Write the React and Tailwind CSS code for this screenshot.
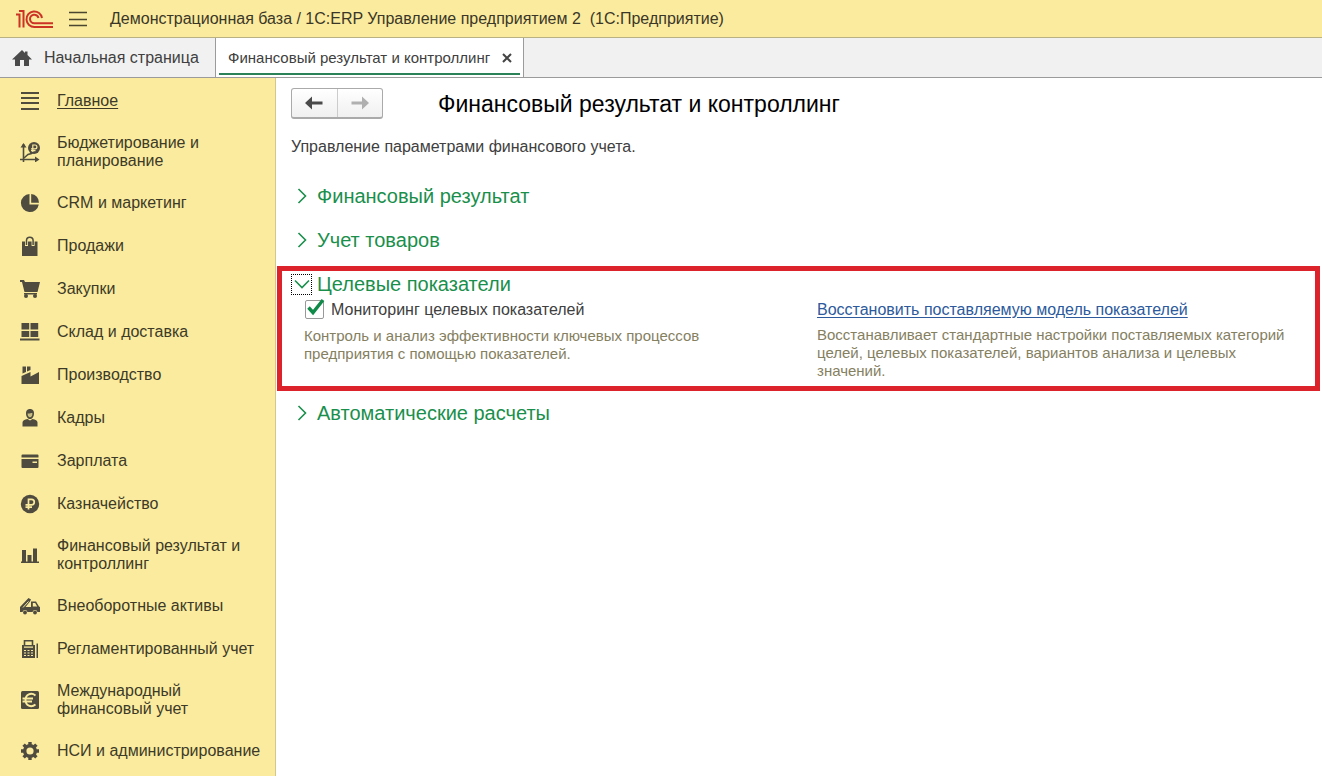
import { useState } from "react";

const ICON = "#4f4c3f";

const icons = {
  main: (
    <g stroke={ICON} strokeWidth="2">
      <path d="M1 2h18M1 7h18M1 12h18M1 18h18" />
    </g>
  ),
  budget: (
    <g fill="none" stroke={ICON}>
      <path d="M3.500 2v18M0 17.500h17" strokeWidth="1.600" />
      <path d="M.5 5.500l3-4.500 3 4.500zM15 14.500l4.500 3-4.500 3z" fill={ICON} stroke="none" />
      <path d="M4 16l4-3.500 3.500-1 2-2" strokeWidth="1.500" />
      <circle cx="14" cy="6" r="6" fill={ICON} stroke="none" />
      <path d="M12.800 10V3h2.200a1.900 1.900 0 0 1 0 3.800h-4M11 8.600h4.500" stroke="#faeb9e" strokeWidth="1.200" />
    </g>
  ),
  crm: (
    <g fill={ICON}>
      <path d="M9.500 1a9 9 0 1 0 9.300 10.500H9.500z" />
      <path d="M11.200 1v8.700h7.800A8.500 8.500 0 0 0 11.200 1z" />
    </g>
  ),
  sales: (
    <g>
      <path d="M2 5.500h15.500V20H2z" fill={ICON} />
      <path d="M6.500 10V4.500a3.300 3.300 0 0 1 6.600 0V10" fill="none" stroke="#faeb9e" strokeWidth="3" />
      <path d="M6.500 9V4.500a3.300 3.300 0 0 1 6.600 0V9" fill="none" stroke={ICON} strokeWidth="1.500" />
    </g>
  ),
  cart: (
    <g fill={ICON}>
      <path d="M0 1h4l1 2h15L17.500 13H4.500L2 3H0z" />
      <path d="M4 14h13v1.500H4z" />
      <circle cx="6" cy="17" r="2" />
      <circle cx="15" cy="17" r="2" />
    </g>
  ),
  stock: (
    <path d="M1.500 1h7.700v6.500H1.500zM10.500 1h7.700v6.500h-7.700zM1.500 9h7.700v6H1.500zM10.500 9h7.700v6h-7.700zM0 16.500h19.500v2H0z" fill={ICON} />
  ),
  factory: (
    <g fill={ICON}>
      <path d="M1.500 19v-8l9-4v4.500L19 7v12z" />
      <path d="M2.500 8.500V1.500h3.500v5.500zM7 6.500v-5h3.500v3.500z" />
    </g>
  ),
  staff: (
    <g fill={ICON}>
      <path d="M6 5.500C6 2 8 1 10 1s4 1 4 4.500S12 11 10 11 6 9 6 5.500z" />
      <path d="M7.600 5.500c2 .3 3-.5 4.800-.5 0 3-1 4.300-2.400 4.300S7.600 8 7.600 5.500z" fill="#c9be82" />
      <path d="M2.500 18.500v-4c0-2 2-3 5-3.500l2.500 1.500 2.500-1.500c3 .5 5 1.500 5 3.500v4z" />
    </g>
  ),
  salary: (
    <path d="M2.500 3.500h15a1 1 0 0 1 1 1v2h-17v-2a1 1 0 0 1 1-1zM1.500 8h17v8a1 1 0 0 1-1 1h-15a1 1 0 0 1-1-1zM12.500 10.500V12H17v-1.500z" fillRule="evenodd" fill={ICON} />
  ),
  treasury: (
    <g>
      <circle cx="10" cy="10" r="9.200" fill={ICON} />
      <path d="M8.500 15.500V5.300h3a2.800 2.800 0 0 1 0 5.600H5.500M5.500 13.200h6.500" fill="none" stroke="#faeb9e" strokeWidth="1.700" />
    </g>
  ),
  bars: (
    <path d="M2 5h4v12H2zM7.500 10h4v7h-4zM13 3.500h4V17h-4zM1 16.500h18V18H1z" fill={ICON} />
  ),
  truck: (
    <g fill={ICON}>
      <path d="M0 11L8.500 2l2.500 1.500-1 2L5.500 11H11V5.500h5l3 5 1 .5v5h-2.500a2.600 2.600 0 0 0-5 0H7.500a2.600 2.600 0 0 0-5 0H0z" />
      <path d="M12.800 7h2.400l2 3.500h-4.400z" fill="#faeb9e" />
      <path d="M3 11.500l5.500-6" stroke="#faeb9e" strokeWidth="1" />
      <circle cx="5" cy="16.500" r="1.900" />
      <circle cx="15" cy="16.500" r="1.900" />
    </g>
  ),
  register: (
    <g>
      <path d="M4.500 7V1.700h8V7" fill="none" stroke={ICON} strokeWidth="1.600" />
      <path d="M2 6h13v13H2zM16.500 4.500H18V19h-1.500z" fill={ICON} />
      <path d="M4 8.200h9M4 11.500h2M7.500 11.500h2M11 11.500h2M4 14h2M7.500 14h2M11 14h2M4 16.500h2M7.500 16.500h2M11 16.500h2" stroke="#faeb9e" strokeWidth="1.200" />
    </g>
  ),
  euro: (
    <g>
      <rect x="1" y="1" width="18" height="18" rx="1.500" fill={ICON} />
      <path d="M15.500 5.500C11 2 5.500 4.500 5.500 10s5.500 8 10 4.500M2.500 8.500h10.500M2.500 11.500h9.500" fill="none" stroke="#faeb9e" strokeWidth="1.900" />
    </g>
  ),
  gear: (
    <g>
      <circle cx="10" cy="10" r="5.300" fill="none" stroke={ICON} strokeWidth="3.400" />
      <path d="M10 1v3M10 16v3M1 10h3M16 10h3M3.600 3.600l2.200 2.200M14.200 14.200l2.200 2.200M3.600 16.400l2.200-2.200M14.200 5.800l2.200-2.200" stroke={ICON} strokeWidth="3.400" />
    </g>
  ),
};

const menu = [
  { icon: "main", label: "Главное", active: true },
  { icon: "budget", label: "Бюджетирование и планирование" },
  { icon: "crm", label: "CRM и маркетинг" },
  { icon: "sales", label: "Продажи" },
  { icon: "cart", label: "Закупки" },
  { icon: "stock", label: "Склад и доставка" },
  { icon: "factory", label: "Производство" },
  { icon: "staff", label: "Кадры" },
  { icon: "salary", label: "Зарплата" },
  { icon: "treasury", label: "Казначейство" },
  { icon: "bars", label: "Финансовый результат и контроллинг" },
  { icon: "truck", label: "Внеоборотные активы" },
  { icon: "register", label: "Регламентированный учет" },
  { icon: "euro", label: "Международный финансовый учет" },
  { icon: "gear", label: "НСИ и администрирование" },
];

function Logo() {
  return (
    <svg width="38" height="20" viewBox="0 0 38 20" fill="none" stroke="#cc3325" strokeWidth="2">
      <path d="M0 5.500h3.500v13M3 2h4.500v16.500" />
      <path d="M26 9A7.800 7.800 0 1 0 18.500 18H37" />
      <path d="M22.500 9A4.300 4.300 0 1 0 18.500 14.300H37" />
    </svg>
  );
}

function Arrow({ back }) {
  return (
    <svg width="18" height="14" viewBox="0 0 18 14" fill={back ? "#4a4a4a" : "#b0b0b0"}>
      {back ? <path d="M0 7l7-6.500v5h10.500v3H7v5z" /> : <path d="M18 7l-7-6.500v5H.5v3H11v5z" />}
    </svg>
  );
}

function SectionTitle({ title, open, onClick }) {
  return (
    <button type="button" aria-expanded={open} onClick={onClick} className="flex items-center gap-[5px] text-xl leading-6 text-[#1a8f4c]">
      <span className={open ? "flex size-[21px] items-center justify-center border border-dotted border-black" : "flex size-[21px] items-center justify-center"}>
        <svg width="16" height="16" viewBox="0 0 16 16" fill="none" stroke="#1a8f4c" strokeWidth="1.600">
          {open ? <path d="M1 4.500l7 7 7-7" /> : <path d="M4.500 1l7 7-7 7" />}
        </svg>
      </span>
      {title}
    </button>
  );
}

export default function App() {
  const [open, setOpen] = useState({ targets: true });
  const [monitoring, setMonitoring] = useState(true);

  const toggle = (key) => setOpen({ ...open, [key]: !open[key] });

  return (
    <div className="flex min-h-screen flex-col bg-white font-['Liberation_Sans',Arial,sans-serif] text-base leading-[18px] text-[#404040]">
      <header className="flex h-[38px] items-center border-b border-[#b9b184] bg-[#faeb9e] pl-4">
        <Logo />
        <button type="button" aria-label="Меню" className="ml-[15px]">
          <svg width="18" height="16" viewBox="0 0 18 16" stroke="#4a462f" strokeWidth="1.300">
            <path d="M0 1.500h18M0 8.500h18M0 14.500h18" />
          </svg>
        </button>
        <span className="ml-[23px] whitespace-pre text-[#3a3728]">
          {"Демонстрационная база / 1С:ERP Управление предприятием 2  (1С:Предприятие)"}
        </span>
      </header>

      <nav className="flex h-10 border-b border-[#9b9b9b] bg-[#f1f1f1]">
        <a href="#home" className="flex w-[215px] items-center gap-3 pl-3">
          <svg width="20" height="18" viewBox="0 0 20 18" fill="#4a4a4a">
            <path d="M10 1L0 10.500h3V17h5v-6h4v6h5v-6.500h3L15.500 6V2.500H13V4z" />
          </svg>
          Начальная страница
        </a>
        <div className="flex border-x border-[#9b9b9b] bg-white px-[3px] pb-[2px]">
          <div className="flex items-center gap-3 border-b-2 border-[#2b8158] pt-1 pr-2 pl-[9px] text-[15px]">
            <a href="#result">Финансовый результат и контроллинг</a>
            <button type="button" aria-label="Закрыть">
              <svg width="10" height="10" viewBox="0 0 10 10" stroke="#444" strokeWidth="2">
                <path d="M1 1l8 8M9 1L1 9" />
              </svg>
            </button>
          </div>
        </div>
      </nav>

      <div className="flex flex-1">
        <aside className="w-[276px] shrink-0 border-r border-[#d3c88c] bg-[#faeb9e] pt-px">
          {menu.map((item) => (
            <a key={item.icon} href={"#" + item.icon} className="flex min-h-[43px] items-center gap-[17px] pt-3 pr-3 pb-[11px] pl-5 text-[#3d3a28]">
              <svg width="20" height="20" viewBox="0 0 20 20" className="-my-1 shrink-0">{icons[item.icon]}</svg>
              <span className={item.active ? "underline underline-offset-2" : ""}>{item.label}</span>
            </a>
          ))}
        </aside>

        <main className="min-w-0 flex-1">
          <div className="flex items-center gap-[55px] pt-[10px] pl-[15px]">
            <div className="flex h-[31px] w-[92px] rounded-[3px] border border-b-2 border-[#aaa] bg-linear-to-b from-white to-[#f0f0f0]">
              <button type="button" aria-label="Назад" className="flex flex-1 items-center justify-center border-r border-[#ccc]">
                <Arrow back />
              </button>
              <button type="button" aria-label="Вперед" className="flex flex-1 items-center justify-center">
                <Arrow />
              </button>
            </div>
            <h1 className="text-[23px] leading-7 text-black">Финансовый результат и контроллинг</h1>
          </div>
          <p className="mt-[19px] pl-[15px]">Управление параметрами финансового учета.</p>

          <div className="mt-[18px] flex h-11 items-center pl-[15px]">
            <SectionTitle title="Финансовый результат" open={!!open.result} onClick={() => toggle("result")} />
          </div>
          <div className="flex h-11 items-center pl-[15px]">
            <SectionTitle title="Учет товаров" open={!!open.goods} onClick={() => toggle("goods")} />
          </div>

          <section className="mt-1 mr-[2px] ml-px border-5 border-[#dc222b] pl-[9px]">
            <div className="flex h-[26px] items-center">
              <SectionTitle title="Целевые показатели" open={open.targets} onClick={() => toggle("targets")} />
            </div>
            {open.targets && (
              <div className="grid grid-cols-2 gap-[15px] pt-[3px] pb-[6px] pl-[13px]">
                <div>
                  <label className="flex items-center gap-[7px] pl-px">
                    <span className="relative flex">
                      <input
                        type="checkbox"
                        checked={monitoring}
                        onChange={(e) => setMonitoring(e.target.checked)}
                        className="size-[19px] appearance-none rounded-[2px] border border-[#999] bg-white"
                      />
                      {monitoring && (
                        <svg width="19" height="19" viewBox="0 0 19 19" className="pointer-events-none absolute inset-0 overflow-visible" fill="none" stroke="#0f8a48" strokeWidth="3.400">
                          <path d="M3.500 7.500l4.500 5L18 0" />
                        </svg>
                      )}
                    </span>
                    Мониторинг целевых показателей
                  </label>
                  <p className="mt-2 pr-8 text-[15px] text-[#85805f]">
                    Контроль и анализ эффективности ключевых процессов предприятия с помощью показателей.
                  </p>
                </div>
                <div>
                  <a href="#restore" className="flex h-[19px] items-center text-[#2c5a9c] underline underline-offset-2">
                    Восстановить поставляемую модель показателей
                  </a>
                  <p className="mt-[7px] pr-4 text-[15px] text-[#85805f]">
                    Восстанавливает стандартные настройки поставляемых категорий целей, целевых показателей, вариантов анализа и целевых значений.
                  </p>
                </div>
              </div>
            )}
          </section>

          <div className="flex h-11 items-center pl-[15px]">
            <SectionTitle title="Автоматические расчеты" open={!!open.auto} onClick={() => toggle("auto")} />
          </div>
        </main>
      </div>
    </div>
  );
}
